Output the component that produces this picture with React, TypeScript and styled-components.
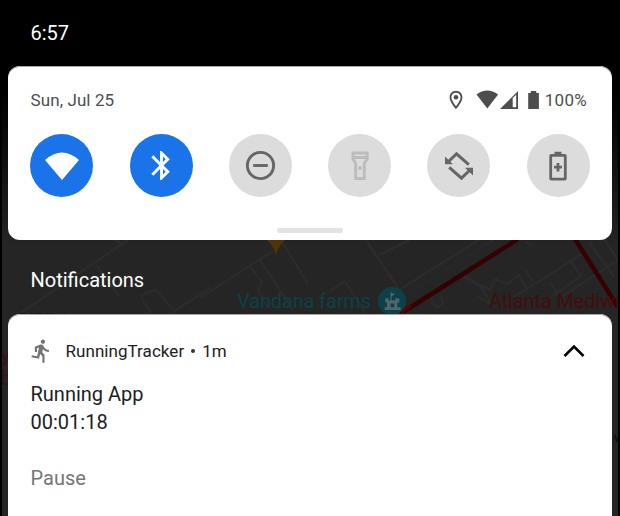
import React from "react";
import styled, { createGlobalStyle } from "styled-components";

const GlobalStyle = createGlobalStyle`
  * { box-sizing: border-box; }
  body { margin: 0; background: #000; font-family: Roboto, sans-serif; overflow: hidden; }
  svg { display: block; flex: none; }
`;

const Screen = styled.main`
  position: relative;
  width: 620px;
  height: 516px;
  padding: 0 8px;
  background: #000;
  overflow: hidden;
  display: flex;
  flex-direction: column;
`;

const MapBackdrop = styled.svg`
  position: absolute;
  left: 0;
  top: 0;
`;

const StatusBar = styled.header`
  position: relative;
  height: 66px;
  flex: none;
  padding: 20px 22.5px 0;
  color: #fff;
  font-size: 20px;
  line-height: 26px;
`;

const Card = styled.section`
  position: relative;
  flex: none;
  width: 604px;
  background: #fff;
  box-shadow: inset 0 1px 0 #a8a8a8;
`;

const QuickSettings = styled(Card)`
  height: 174px;
  border-radius: 12px;
  display: flex;
  flex-direction: column;
`;

const InfoRow = styled.div`
  display: flex;
  align-items: center;
  justify-content: space-between;
  height: 20px;
  margin-top: 24px;
  padding: 0 25px 0 22.5px;
  color: #4d4d4d;
  font-size: 17px;
  letter-spacing: 0.1px;
`;

const InfoIcons = styled.div`
  display: flex;
  align-items: center;
  gap: 9px;
  color: #4d4d4d;
`;

const Percent = styled.span`
  margin-left: -4px;
  letter-spacing: 0.3px;
`;

const Tiles = styled.div`
  display: flex;
  justify-content: space-between;
  margin-top: 24px;
  padding: 0 22.4px;
`;

const Tile = styled.button<{ $on?: boolean; $dim?: boolean }>`
  width: 63px;
  height: 63px;
  padding: 0;
  border: 0;
  border-radius: 50%;
  display: grid;
  place-items: center;
  background: ${(p) => (p.$on ? "#1a73e8" : "#dcdcdc")};
  color: ${(p) => (p.$on ? "#fff" : p.$dim ? "#bcbcbc" : "#666")};
`;

const Handle = styled.div`
  width: 66px;
  height: 5px;
  margin: 31px 0 0 269px;
  border-radius: 2px;
  background: #e3e3e3;
`;

const Heading = styled.h2`
  position: relative;
  flex: none;
  height: 74px;
  margin: 0;
  padding: 27px 22.5px 0;
  color: #fff;
  font-size: 20px;
  font-weight: 400;
  line-height: 26px;
`;

const Notification = styled(Card)`
  height: 202px;
  padding: 24px 22.5px 0;
  border-radius: 12px 12px 0 0;
  color: #212121;
`;

const NotificationHeader = styled.div`
  display: flex;
  align-items: center;
  height: 25px;
  font-size: 17px;
`;

const AppName = styled.span`
  margin-left: 16px;
  letter-spacing: 0.05px;
`;

const Dot = styled.i`
  width: 4px;
  height: 4px;
  margin: 1px 7px 0;
  border-radius: 50%;
  background: #333;
`;

const Expand = styled.button`
  margin: 0 3.5px 0 auto;
  padding: 0;
  border: 0;
  background: none;
  color: #000;
`;

const Body = styled.p`
  margin: 18px 0 0;
  font-size: 20px;
  line-height: 27.5px;
`;

const Action = styled.button`
  display: block;
  margin-top: 28.5px;
  padding: 0;
  border: 0;
  background: none;
  color: #757575;
  font: 400 20px/26px Roboto, sans-serif;
`;

function StreetMap() {
  return (
    <MapBackdrop width="620" height="516" viewBox="0 0 620 516">
      <defs>
        <linearGradient id="shade" gradientUnits="userSpaceOnUse" x1="0" y1="90" x2="0" y2="245">
          <stop offset="0" stopColor="#000" />
          <stop offset=".3" stopColor="#0a0a0a" />
          <stop offset=".9" stopColor="#202020" />
          <stop offset="1" stopColor="#252525" />
        </linearGradient>
        <clipPath id="display"><rect x="2" width="616" height="516" /></clipPath>
      </defs>
      <g clipPath="url(#display)">
        <rect x="2" y="66" width="616" height="450" fill="url(#shade)" />
        <g fill="none" stroke="#2b2b2b" strokeWidth="2.500">
          <path d="M22 312 128 240M96 265l23 31M115 240l9 6M151 312l-9-12q-1-4 2-6l10-4q4 0 6 4l14 17 36-23M200 298l79-51M260 260l33 50M282 242l26 42M251 268l11 14-4 8 10 18M330 291l15-10 20 32M366 240l34 51M379 255l31-15M400 290l30-20" />
          <path d="M404 287l75-47M480 248l13-8M464 276l26 14 5-11 12 5 12-9 8 14-14 8M460 274l22 14 8 14M477 296l15 9M525 270l8 12M519 294l63-40M569 259l12 17-30 21M550 282l18 26M560 298l58-38M589 242l25 35M605 240l13 20M431 298l5 9 7-2-2-10M526 242l6 4" />
        </g>
        <path d="M410 293l80-51" fill="none" stroke="#222a31" strokeWidth="1.500" />
        <path d="M400 314 518 239M575 239l43 68" fill="none" stroke="#350000" strokeWidth="4.500" />
        <path d="M267 240h18q-6 5-9 15-3-10-9-15z" fill="#4f3505" />
        <circle cx="392" cy="301" r="14" fill="#0c414a" />
        <path
          d="M385.300 298.300h3v2h2.200v-8l4.500 2-3.400 2v4h3.800v-2h3.900v4.300h-2v4.700h3.400v2.700h-16v-2.700H387v-4.700h-1.700zM390.700 303.500v3.800h3.600v-3.800z"
          fill="#50666a"
          fillRule="evenodd"
        />
        <path d="M402 314q3-7 9-8" fill="none" stroke="#540707" strokeWidth="3" />
        <g fontFamily="Roboto, sans-serif" fontSize="20">
          <text x="237" y="308" fill="#0c4145" textLength="134">Vandana farms</text>
          <text x="489" y="308" fill="#440d0d" textLength="126">Atlanta Mediw</text>
          <text x="17" y="326" fill="#171717" fontWeight="500" fontSize="18">SITE 4</text>
          <text x="1" y="362" fill="#3b1017">y</text>
          <text x="1" y="385" fill="#3b1017">b</text>
        </g>
        <path d="M618 298q-3 4 0 9" fill="none" stroke="#440d0d" strokeWidth="2" />
        <path d="M613 441l2-6 2 7 1-6" fill="none" stroke="#111" />
      </g>
    </MapBackdrop>
  );
}

const Pin = () => (
  <svg width="22" height="22" viewBox="0 0 24 24" fill="currentColor">
    <path d="M12 2C8.130 2 5 5.130 5 9c0 5.250 7 13 7 13s7-7.750 7-13c0-3.870-3.130-7-7-7zM7 9c0-2.760 2.240-5 5-5s5 2.240 5 5c0 2.880-2.880 7.190-5 9.880C9.920 16.210 7 11.850 7 9z" />
    <circle cx="12" cy="9" r="2.500" />
  </svg>
);

const StatusGlyphs = () => (
  <svg width="64" height="20" viewBox="476 90 64 20" fill="currentColor">
    <path d="M476.500 94.500Q487.300 86.300 498.100 94.500L487.300 108.500z" />
    <path d="M500 109 518 91v18zM512.700 98v9.300h3.500V94.800z" fillRule="evenodd" />
    <path d="M528.200 93h2.600v-2h5.500v2h2.600v16h-10.700z" />
  </svg>
);

const Wifi = () => (
  <svg width="36" height="30" viewBox="0 0 36 30" fill="currentColor">
    <path d="M1 9Q18-6 35 9L18 29z" />
  </svg>
);

const Bluetooth = () => (
  <svg width="35" height="35" viewBox="0 0 24 24" fill="currentColor">
    <path d="M17.710 7.710 12 2h-1v7.590L6.410 5 5 6.410 10.590 12 5 17.590 6.410 19 11 14.410V22h1l5.710-5.710-4.300-4.290 4.300-4.290zM13 5.830l1.880 1.880L13 9.590V5.830zm1.880 10.460L13 18.170v-3.760l1.880 1.880z" />
  </svg>
);

const DoNotDisturb = () => (
  <svg width="35" height="35" viewBox="0 0 24 24" fill="none" stroke="currentColor" strokeWidth="2">
    <circle cx="12" cy="12" r="9" /><path d="M7 12h10" />
  </svg>
);

const Flashlight = () => (
  <svg width="20" height="30" viewBox="0 0 20 30" fill="none" stroke="currentColor" strokeWidth="2.800">
    <path d="M2.900 2h14.300v6l-2.900 4.200v15.300H5.700V12.200L2.900 8zM3 6.500h14" />
    <circle cx="10" cy="17" r="2" fill="currentColor" stroke="none" />
  </svg>
);

const Rotate = () => (
  <svg width="30" height="30" viewBox="0 0 30 30" fill="none" stroke="currentColor" strokeWidth="3">
    <path d="M24.800 13.700 12.500 2.800 4 11M5.200 16.300 17.500 27.200 26 19" />
    <path d="M1 5.500v7.800h8zM29 24.500v-7.800h-8z" fill="currentColor" stroke="none" />
  </svg>
);

const BatterySaver = () => (
  <svg width="18" height="30" viewBox="0 0 18 30" fill="none" stroke="currentColor" strokeWidth="2.800">
    <rect x="1.700" y="4.400" width="14.600" height="23.700" rx=".5" />
    <path d="M5.500 2.200h7M9 12v8.500M5 16.200h8" />
  </svg>
);

const Runner = () => (
  <svg width="19" height="24" viewBox="2.700 1 17.100 22.200" fill="#757575">
    <path d="M13.490 5.480c1.100 0 2-.9 2-2s-.9-2-2-2-2 .9-2 2 .9 2 2 2zm-3.600 13.900 1-4.400 2.100 2v6h2v-7.500l-2.100-2 .6-3c1.300 1.500 3.300 2.500 5.500 2.500v-2c-1.900 0-3.500-1-4.300-2.400l-1-1.600c-.4-.6-1-1-1.700-1-.3 0-.5.1-.8.1l-5.200 2.200v4.700h2v-3.400l1.800-.7-1.600 8.100-4.900-1-.4 2 7 1.400z" />
  </svg>
);

export default function App() {
  return (
    <>
      <GlobalStyle />
      <Screen>
        <StreetMap />
        <StatusBar>6:57</StatusBar>
        <QuickSettings>
          <InfoRow>
            <span>Sun, Jul 25</span>
            <InfoIcons>
              <Pin />
              <StatusGlyphs />
              <Percent>100%</Percent>
            </InfoIcons>
          </InfoRow>
          <Tiles>
            <Tile $on aria-label="Wi-Fi"><Wifi /></Tile>
            <Tile $on aria-label="Bluetooth"><Bluetooth /></Tile>
            <Tile aria-label="Do not disturb"><DoNotDisturb /></Tile>
            <Tile $dim aria-label="Flashlight"><Flashlight /></Tile>
            <Tile aria-label="Auto-rotate"><Rotate /></Tile>
            <Tile aria-label="Battery saver"><BatterySaver /></Tile>
          </Tiles>
          <Handle />
        </QuickSettings>
        <Heading>Notifications</Heading>
        <Notification>
          <NotificationHeader>
            <Runner />
            <AppName>RunningTracker</AppName>
            <Dot />
            <span>1m</span>
            <Expand aria-label="Collapse">
              <svg width="24" height="14" viewBox="0 0 24 14" fill="none" stroke="currentColor" strokeWidth="2.600">
                <path d="M2.500 12 12 2.500 21.500 12" />
              </svg>
            </Expand>
          </NotificationHeader>
          <Body>Running App<br />00:01:18</Body>
          <Action>Pause</Action>
        </Notification>
      </Screen>
    </>
  );
}
